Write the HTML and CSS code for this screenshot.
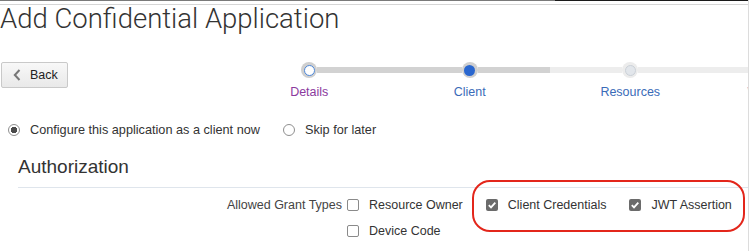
FILE: index.html
```html
<!DOCTYPE html>
<html>
<head>
<meta charset="utf-8">
<link rel="stylesheet" href="styles.css">
</head>
<body>
<div class="page">
  <div class="topline"></div>
  <div class="topline2"></div>
  <h1 class="title">Add Confidential Application</h1>

  <div class="nav-row">
    <button class="back-btn">
      <svg class="chev" width="8" height="12" viewBox="0 0 8 12"><path d="M6.5 1 L1.8 6 L6.5 11" fill="none" stroke="#777" stroke-width="2"/></svg>
      <span>Back</span>
    </button>
    <div class="stepper">
      <div class="step">
        <div class="step-head"><span class="seg"></span><span class="dot dot-done"><i></i></span><span class="seg seg-dark"></span></div>
        <div class="step-label label-visited">Details</div>
      </div>
      <div class="step">
        <div class="step-head"><span class="seg seg-dark"></span><span class="dot dot-current"><i></i></span><span class="seg seg-dark"></span></div>
        <div class="step-label">Client</div>
      </div>
      <div class="step">
        <div class="step-head"><span class="seg seg-light"></span><span class="dot dot-todo"><i></i></span><span class="seg seg-light"></span></div>
        <div class="step-label">Resources</div>
      </div>
      <div class="step">
        <div class="step-head"><span class="seg seg-light"></span><span class="dot dot-todo"><i></i></span><span class="seg seg-light"></span></div>
        <div class="step-label">Web Tier Policy</div>
      </div>
    </div>
  </div>

  <div class="radio-row">
    <label class="radio-opt"><span class="radio radio-on"></span>Configure this application as a client now</label>
    <label class="radio-opt"><span class="radio"></span>Skip for later</label>
  </div>

  <h2 class="section-title">Authorization</h2>
  <div class="separator"></div>

  <div class="grant-row">
    <div class="grant-label">Allowed Grant Types</div>
    <div class="grant-opts">
      <label class="chk-opt"><span class="chk"></span>Resource Owner</label>
      <label class="chk-opt"><span class="chk chk-on"><svg width="12" height="12" viewBox="0 0 12 12"><path d="M2.8 6.2 L5 8.4 L9.3 3.6" fill="none" stroke="#fff" stroke-width="1.8"/></svg></span>Client Credentials</label>
      <label class="chk-opt"><span class="chk chk-on"><svg width="12" height="12" viewBox="0 0 12 12"><path d="M2.8 6.2 L5 8.4 L9.3 3.6" fill="none" stroke="#fff" stroke-width="1.8"/></svg></span>JWT Assertion</label>
      <label class="chk-opt"><span class="chk"></span>Device Code</label>
    </div>
    <div class="highlight"></div>
  </div>
</div>
</body>
</html>
```

FILE: styles.css
```css
html, body {
  margin: 0;
  padding: 0;
  background: #fff;
}
.page {
  width: 748px;
  height: 251px;
  overflow: hidden;
  border-right: 1px solid #dcdcdc;
  font-family: "Liberation Sans", Arial, sans-serif;
  color: #333;
  position: relative;
}
.topline {
  height: 1px;
  background: linear-gradient(to right, #7a7a7a 0, #7a7a7a 555px, #1a1a1a 555px);
}
.topline2 {
  margin-top: 3px;
  height: 1px;
  background: #d6d6d6;
}
.title {
  margin: 0;
  font-family: Roboto, sans-serif;
  font-weight: 300;
  font-size: 27.5px;
  line-height: 27px;
  color: #333;
  white-space: nowrap;
}
.nav-row {
  display: flex;
  align-items: flex-start;
  margin-top: 30px;
  padding-left: 1px;
}
.back-btn {
  flex: none;
  width: 67px;
  height: 26px;
  box-sizing: border-box;
  border: 1px solid #c9c9c9;
  border-radius: 2px;
  background: linear-gradient(#f8f8f8, #e9e9e9);
  display: flex;
  align-items: center;
  padding: 0 0 0 11px;
  gap: 9px;
  font-family: "Liberation Sans", Arial, sans-serif;
  font-size: 12.5px;
  color: #222;
}
.stepper {
  display: flex;
  margin-left: 161px;
  flex: none;
}
.step {
  width: 160.5px;
  flex: none;
  display: flex;
  flex-direction: column;
  align-items: center;
}
.step-head {
  width: 100%;
  display: grid;
  grid-template-columns: 1fr 16px 1fr;
  align-items: center;
  height: 16px;
}
.seg {
  height: 6px;
}
.seg-dark { background: #d2d2d2; }
.seg-light { background: #ededed; }
.dot {
  width: 16px;
  height: 16px;
  border-radius: 50%;
  background: #cfcfcf;
  display: flex;
  align-items: center;
  justify-content: center;
}
.dot i {
  display: block;
  box-sizing: border-box;
  width: 11px;
  height: 11px;
  border-radius: 50%;
}
.dot-done i {
  background: #fff;
  border: 1.5px solid #4d88da;
}
.dot-current i {
  background: #2a67cf;
}
.dot-todo {
  background: #ececec;
}
.dot-todo i {
  background: #e2e6eb;
  border: 1px solid #cbd1d8;
}
.step-label {
  margin-top: 7px;
  font-size: 12.5px;
  line-height: 15px;
  color: #3a6bb8;
  white-space: nowrap;
}
.label-visited {
  color: #8b3a9e;
}
.radio-row {
  display: flex;
  gap: 23px;
  margin-top: 21px;
  padding-left: 8px;
  font-size: 12.7px;
  line-height: 18px;
}
.radio-opt {
  display: flex;
  align-items: center;
  gap: 10px;
}
.radio {
  width: 12px;
  height: 12px;
  box-sizing: border-box;
  border-radius: 50%;
  border: 1px solid #8f8f8f;
  background: #fff;
}
.radio-on {
  background: radial-gradient(circle, #4a4a4a 0, #4a4a4a 3px, #fff 3.5px);
}
.section-title {
  margin: 16px 0 0 18px;
  font-weight: normal;
  font-size: 19px;
  line-height: 24px;
  color: #333;
}
.separator {
  margin: 8px 0 0 18px;
  height: 1px;
  background: #dfe5ec;
}
.grant-row {
  position: relative;
  display: grid;
  grid-template-columns: 342px 401px;
  column-gap: 5px;
  margin-top: 8px;
  font-size: 12.5px;
  line-height: 18px;
}
.grant-label {
  text-align: right;
  color: #444;
  white-space: nowrap;
}
.grant-opts {
  display: flex;
  flex-wrap: wrap;
  column-gap: 23px;
  row-gap: 8px;
}
.chk-opt {
  display: flex;
  align-items: center;
  gap: 10px;
  white-space: nowrap;
}
.chk {
  width: 12px;
  height: 12px;
  box-sizing: border-box;
  border: 1px solid #8a8a8a;
  border-radius: 2px;
  background: #fff;
  display: flex;
}
.chk-on {
  border: none;
  background: #6b6b6b;
}
.highlight {
  position: absolute;
  left: 472px;
  top: -16px;
  width: 273px;
  height: 52px;
  box-sizing: border-box;
  border: 2px solid #e3261b;
  border-radius: 18px;
  pointer-events: none;
}
```
